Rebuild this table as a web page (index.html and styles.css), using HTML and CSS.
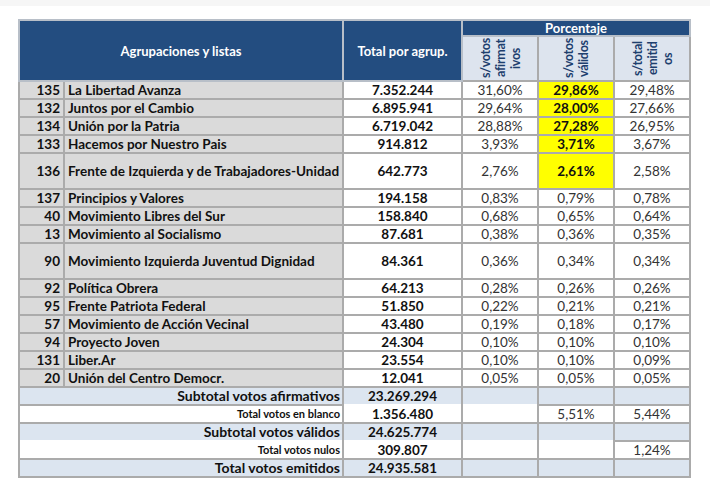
FILE: index.html
```html
<!DOCTYPE html>
<html lang="es">
<head>
<meta charset="utf-8">
<title>Resultados</title>
<link rel="stylesheet" href="styles.css">
</head>
<body>
<div class="topband"></div>
<div class="wrap">
<table class="res">
  <colgroup>
    <col class="c-num"><col class="c-name"><col class="c-tot"><col class="c-p"><col class="c-p"><col class="c-p">
  </colgroup>
  <thead>
    <tr class="h1">
      <th colspan="2" rowspan="2" class="hb">Agrupaciones y listas</th>
      <th rowspan="2" class="hb">Total por agrup.</th>
      <th colspan="3" class="hb hp">Porcentaje</th>
    </tr>
    <tr class="h2">
      <th class="hs"><div class="rot">s/votos<br>afirmat<br>ivos</div></th>
      <th class="hs"><div class="rot">s/votos<br>válidos</div></th>
      <th class="hs"><div class="rot">s/total<br>emitid<br>os</div></th>
    </tr>
  </thead>
  <tbody>
    <tr><td class="num">135</td><td class="name">La Libertad Avanza</td><td class="tot">7.352.244</td><td class="pc">31,60%</td><td class="pc hl">29,86%</td><td class="pc">29,48%</td></tr>
    <tr><td class="num">132</td><td class="name">Juntos por el Cambio</td><td class="tot">6.895.941</td><td class="pc">29,64%</td><td class="pc hl">28,00%</td><td class="pc">27,66%</td></tr>
    <tr><td class="num">134</td><td class="name">Unión por la Patria</td><td class="tot">6.719.042</td><td class="pc">28,88%</td><td class="pc hl">27,28%</td><td class="pc">26,95%</td></tr>
    <tr><td class="num">133</td><td class="name">Hacemos por Nuestro Pais</td><td class="tot">914.812</td><td class="pc">3,93%</td><td class="pc hl">3,71%</td><td class="pc">3,67%</td></tr>
    <tr class="dbl"><td class="num">136</td><td class="name">Frente de Izquierda y de Trabajadores-Unidad</td><td class="tot">642.773</td><td class="pc">2,76%</td><td class="pc hl">2,61%</td><td class="pc">2,58%</td></tr>
    <tr><td class="num">137</td><td class="name">Principios y Valores</td><td class="tot">194.158</td><td class="pc">0,83%</td><td class="pc">0,79%</td><td class="pc">0,78%</td></tr>
    <tr><td class="num">40</td><td class="name">Movimiento Libres del Sur</td><td class="tot">158.840</td><td class="pc">0,68%</td><td class="pc">0,65%</td><td class="pc">0,64%</td></tr>
    <tr><td class="num">13</td><td class="name">Movimiento al Socialismo</td><td class="tot">87.681</td><td class="pc">0,38%</td><td class="pc">0,36%</td><td class="pc">0,35%</td></tr>
    <tr class="dbl"><td class="num">90</td><td class="name">Movimiento Izquierda Juventud Dignidad</td><td class="tot">84.361</td><td class="pc">0,36%</td><td class="pc">0,34%</td><td class="pc">0,34%</td></tr>
    <tr><td class="num">92</td><td class="name">Política Obrera</td><td class="tot">64.213</td><td class="pc">0,28%</td><td class="pc">0,26%</td><td class="pc">0,26%</td></tr>
    <tr><td class="num">95</td><td class="name">Frente Patriota Federal</td><td class="tot">51.850</td><td class="pc">0,22%</td><td class="pc">0,21%</td><td class="pc">0,21%</td></tr>
    <tr><td class="num">57</td><td class="name">Movimiento de Acción Vecinal</td><td class="tot">43.480</td><td class="pc">0,19%</td><td class="pc">0,18%</td><td class="pc">0,17%</td></tr>
    <tr><td class="num">94</td><td class="name">Proyecto Joven</td><td class="tot">24.304</td><td class="pc">0,10%</td><td class="pc">0,10%</td><td class="pc">0,10%</td></tr>
    <tr><td class="num">131</td><td class="name">Liber.Ar</td><td class="tot">23.554</td><td class="pc">0,10%</td><td class="pc">0,10%</td><td class="pc">0,09%</td></tr>
    <tr><td class="num">20</td><td class="name">Unión del Centro Democr.</td><td class="tot">12.041</td><td class="pc">0,05%</td><td class="pc">0,05%</td><td class="pc">0,05%</td></tr>
    <tr class="sub s-afirm"><td colspan="2" class="lbl big">Subtotal votos afirmativos</td><td class="tot nb">23.269.294</td><td class="pc nb"></td><td class="pc"></td><td class="pc"></td></tr>
    <tr class="plain"><td colspan="2" class="lbl small nt">Total votos en blanco</td><td class="tot nt">1.356.480</td><td class="pc nt"></td><td class="pc">5,51%</td><td class="pc">5,44%</td></tr>
    <tr class="sub"><td colspan="2" class="lbl big nb">Subtotal votos válidos</td><td class="tot nb">24.625.774</td><td class="pc nb"></td><td class="pc nb"></td><td class="pc"></td></tr>
    <tr class="plain"><td colspan="2" class="lbl small nt">Total votos nulos</td><td class="tot nt">309.807</td><td class="pc nt"></td><td class="pc nt"></td><td class="pc">1,24%</td></tr>
    <tr class="sub"><td colspan="2" class="lbl big">Total votos emitidos</td><td class="tot">24.935.581</td><td class="pc"></td><td class="pc"></td><td class="pc"></td></tr>
  </tbody>
</table>
</div>
</body>
</html>
```

FILE: styles.css
```css
html, body {
  margin: 0;
  padding: 0;
  background: #ffffff;
}
body {
  font-family: "Lato", "Open Sans", "Liberation Sans", sans-serif;
  color: #111;
  width: 710px;
  height: 496px;
  overflow: hidden;
}
.topband {
  height: 6px;
  background: #f6f6f6;
}
.wrap {
  padding: 13px 0 0 18px;
}
.res {
  border-collapse: collapse;
  table-layout: fixed;
  width: 671px;
  border: 2px solid #a9a9a9;
}
.c-num { width: 45px; }
.c-name { width: 279px; }
.c-tot { width: 119px; }
.c-p { width: 76px; }

.res th, .res td {
  border: 2px solid #ababab;
  padding: 0;
  overflow: hidden;
  white-space: nowrap;
}
.hb {
  background: #234d80;
  color: #ffffff;
  font-weight: 700;
  font-size: 13px;
  text-align: center;
}
.h1 th { border-color: #b8bfc8; }
.hp {
  height: 14px;
  line-height: 14px;
  font-size: 13px;
}
.h2 th {
  height: 43px;
  line-height: 0;
}
.hs {
  background: #dde4ee;
  color: #1e3f6e;
  border-color: #b8bfc8;
  text-align: center;
  vertical-align: middle;
}
.rot {
  display: block;
  writing-mode: vertical-rl;
  transform: rotate(180deg);
  height: 43px;
  width: max-content;
  margin: 0 auto;
  font-size: 12.5px;
  font-weight: 700;
  line-height: 15px;
  letter-spacing: -0.3px;
  text-align: center;
}
.res tbody td {
  height: 16px;
  line-height: 16px;
  font-size: 13.5px;
}
.res tbody tr.dbl td { height: 34px; }
.num {
  background: #dadada;
  font-weight: 700;
  text-align: right;
  padding-right: 3px !important;
}
.name {
  background: #dadada;
  font-weight: 700;
  padding-left: 3px !important;
}
.tot {
  font-weight: 700;
  text-align: center;
}
.pc {
  text-align: center;
  color: #333;
  font-weight: 400;
}
.pc.hl {
  background: #ffff00;
  color: #111;
  font-weight: 700;
}
.sub td { background: #dce5f0; }
.plain td { background: #ffffff; }
.lbl {
  text-align: right;
  font-weight: 700;
  padding-right: 2px !important;
}
.lbl.big { font-size: 14px !important; }
.lbl.small { font-size: 11px !important; }
.res td.nb { border-bottom-color: transparent; }
.res td.nt { border-top-color: transparent; }
```
